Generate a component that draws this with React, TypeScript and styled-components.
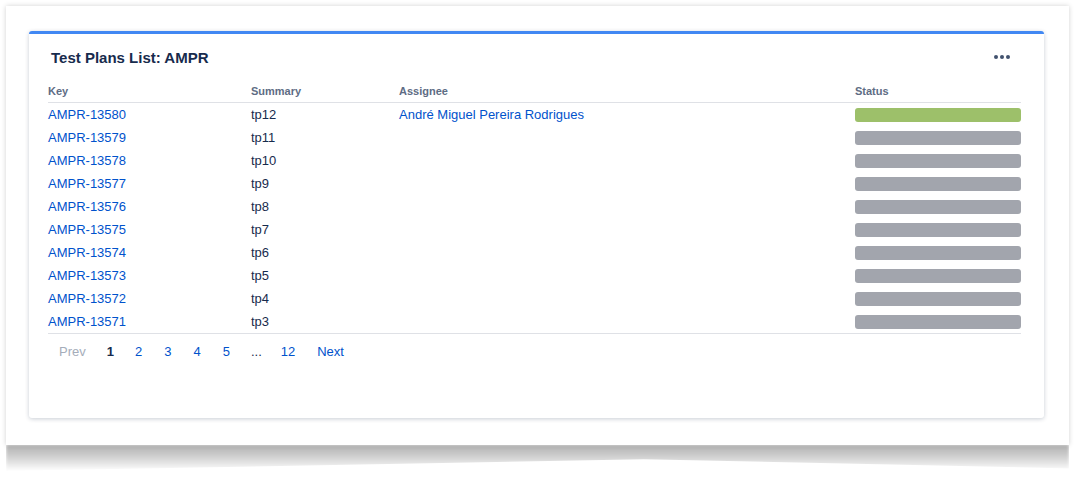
import React from 'react'
import styled, { createGlobalStyle } from 'styled-components'

const GlobalStyle = createGlobalStyle`
  html, body {
    margin: 0;
    padding: 0;
    background: #ffffff;
    font-family: "Liberation Sans", Arial, sans-serif;
  }
`;

type Plan = { key: string; summary: string; assignee?: string; done?: boolean };

const plans: Plan[] = [
    { key: 'AMPR-13580', summary: 'tp12', assignee: 'André Miguel Pereira Rodrigues', done: true },
    { key: 'AMPR-13579', summary: 'tp11' },
    { key: 'AMPR-13578', summary: 'tp10' },
    { key: 'AMPR-13577', summary: 'tp9' },
    { key: 'AMPR-13576', summary: 'tp8' },
    { key: 'AMPR-13575', summary: 'tp7' },
    { key: 'AMPR-13574', summary: 'tp6' },
    { key: 'AMPR-13573', summary: 'tp5' },
    { key: 'AMPR-13572', summary: 'tp4' },
    { key: 'AMPR-13571', summary: 'tp3' },
];

const pages = ['1', '2', '3', '4', '5', '...', '12'];

function App() {
    return (
        <>
            <GlobalStyle />
            <Paper>
                <Card>
                    <CardHeader>
                        <Title>Test Plans List: AMPR</Title>
                        <MoreButton aria-label="more">
                            <Dot /><Dot /><Dot />
                        </MoreButton>
                    </CardHeader>
                    <Table>
                        <thead>
                            <tr>
                                <Th style={{ width: 203 }}>Key</Th>
                                <Th style={{ width: 148 }}>Summary</Th>
                                <Th>Assignee</Th>
                                <Th style={{ width: 166 }}>Status</Th>
                            </tr>
                        </thead>
                        <tbody>
                            {plans.map((p) => (
                                <tr key={p.key}>
                                    <Td><Link>{p.key}</Link></Td>
                                    <Td>{p.summary}</Td>
                                    <Td>{p.assignee && <Link>{p.assignee}</Link>}</Td>
                                    <Td><StatusBar done={p.done} /></Td>
                                </tr>
                            ))}
                        </tbody>
                    </Table>
                    <Pagination>
                        <PageItem disabled>Prev</PageItem>
                        {pages.map((p) => (
                            <PageItem key={p} current={p === '1'} gap={p === '...'}>{p}</PageItem>
                        ))}
                        <PageItem>Next</PageItem>
                    </Pagination>
                </Card>
            </Paper>
            <PaperShadow />
        </>
    )
}

export default App

const Paper = styled.div`
margin: 6px 0 0 6px;
width: 1063px;
height: 439px;
padding-top: 25px;
box-sizing: border-box;
background: #ffffff;
box-shadow: 0 0 5px rgb(0 0 0 / 18%);
`;

const PaperShadow = styled.div`
margin-left: 6px;
width: 1063px;
height: 26px;
background: linear-gradient(to bottom, rgb(0 0 0 / 30%), rgb(0 0 0 / 20%) 40%, rgb(0 0 0 / 0%));
clip-path: polygon(0 0, 100% 0, 100% 90%, 60% 55%, 0 100%);
filter: blur(1.5px);
`;

const Card = styled.div`
margin-left: 23px;
width: 1015px;
height: 387px;
box-sizing: border-box;
border-top: 3px solid #4188f3;
border-radius: 3px;
padding: 0 23px 0 19px;
background: #ffffff;
box-shadow: 0 1px 4px rgb(9 30 66 / 22%);
`;

const CardHeader = styled.div`
display: flex;
align-items: center;
justify-content: space-between;
height: 46px;
padding-left: 3px;
`;

const Title = styled.h2`
margin: 0;
font-size: 15px;
font-weight: 600;
color: #172b4d;
`;

const MoreButton = styled.div`
display: flex;
gap: 2px;
margin-right: 11px;
padding: 2px 0;
`;

const Dot = styled.span`
width: 4px;
height: 4px;
border-radius: 50%;
background: #42526e;
`;

const Table = styled.table`
width: 100%;
border-collapse: collapse;
table-layout: fixed;
border-bottom: 1px solid #dfe1e6;
`;

const Th = styled.th`
text-align: left;
font-size: 11px;
font-weight: 700;
color: #5e6c84;
height: 22px;
padding: 0;
border-bottom: 1px solid #dfe1e6;
vertical-align: middle;
`;

const Td = styled.td`
height: 23px;
padding: 0;
font-size: 13px;
color: #172b4d;
vertical-align: middle;
white-space: nowrap;
`;

const Link = styled.a`
color: #0052cc;
text-decoration: none;
cursor: pointer;
`;

const StatusBar = styled.div<{ done?: boolean }>`
height: 14px;
border-radius: 3px;
background: ${(p) => (p.done ? '#9dc06a' : '#a2a5ad')};
`;

const Pagination = styled.div`
display: flex;
align-items: center;
height: 34px;
`;

const PageItem = styled.span<{ disabled?: boolean; current?: boolean; gap?: boolean }>`
padding: ${(p) => (p.current ? '0 10px' : p.gap ? '0 8px 0 10px' : '0 11px')};
font-size: 13px;
color: ${(p) => (p.disabled ? '#a5adba' : p.current ? '#172b4d' : p.gap ? '#172b4d' : '#0052cc')};
font-weight: ${(p) => (p.current ? 700 : 400)};
cursor: ${(p) => (p.disabled || p.current || p.gap ? 'default' : 'pointer')};
`;
